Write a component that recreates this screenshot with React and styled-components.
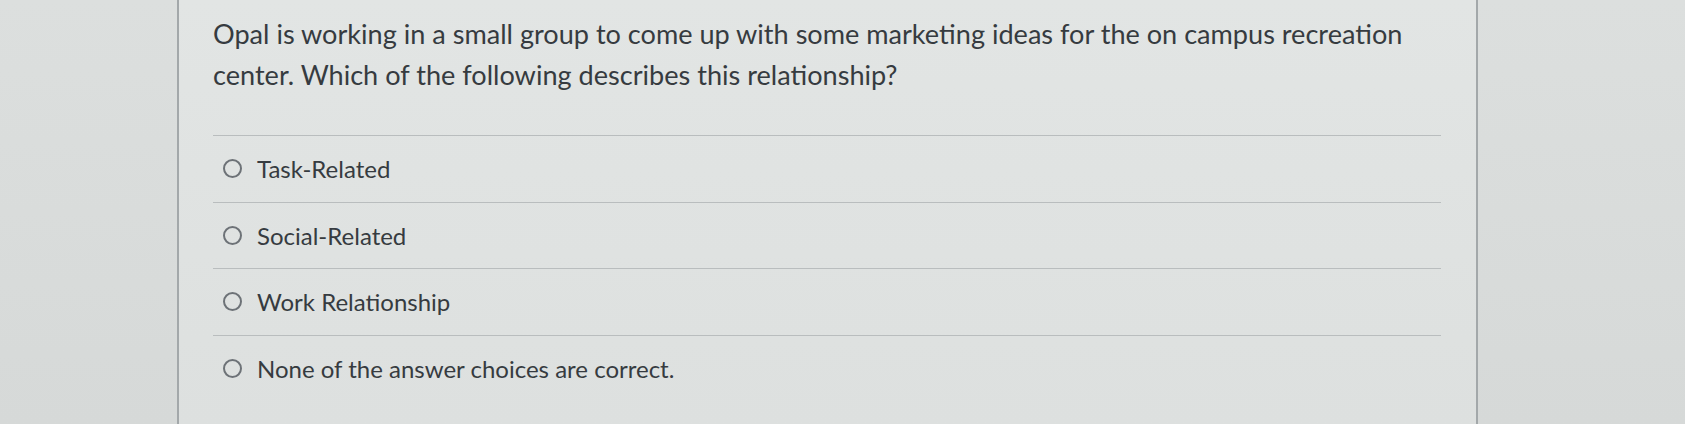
import styled, { createGlobalStyle } from "styled-components";

const answers = [
  "Task-Related",
  "Social-Related",
  "Work Relationship",
  "None of the answer choices are correct.",
];

export default function App() {
  return (
    <>
      <GlobalStyle />
      <Page>
        <Gutter />
        <Main>
          <Question>
            Opal is working in a small group to come up with some marketing ideas for the on campus recreation
            center. Which of the following describes this relationship?
          </Question>
          <AnswerList>
            {answers.map((text) => (
              <Answer key={text}>
                <Radio />
                <AnswerText>{text}</AnswerText>
              </Answer>
            ))}
          </AnswerList>
        </Main>
        <Gutter $right />
      </Page>
    </>
  );
}

const GlobalStyle = createGlobalStyle`
body {
  margin: 0;
  background: #dfe2e1;
}
*, *::before, *::after {
  box-sizing: border-box;
}
`

const Page = styled.div`
height: 424px;
display: flex;
background: linear-gradient(180deg, #e2e5e4 0%, #dde0df 100%);
font-family: Lato, "Open Sans", sans-serif;
color: #363b40;
overflow: hidden;
`

const Gutter = styled.div`
width: ${(p) => (p.$right ? "auto" : "177px")};
flex: ${(p) => (p.$right ? "1" : "none")};
background: linear-gradient(180deg, #dcdfde 0%, #d6d9d8 100%);
`

const Main = styled.div`
width: 1301px;
flex: none;
padding: 13px 35px 0 34px;
border-left: 2px solid #a3a8aa;
border-right: 2px solid #a3a8aa;
`

const Question = styled.div`
font-size: 27.1px;
line-height: 41px;
margin-bottom: 40px;
`

const AnswerList = styled.div`
border-top: 1.5px solid #b9bdbe;
`

const Answer = styled.div`
height: 66.5px;
display: flex;
align-items: center;
padding-left: 10px;
border-bottom: 1.5px solid #b9bdbe;
&:last-child {
  border-bottom: none;
}
`

const Radio = styled.span`
width: 19px;
height: 19px;
border-radius: 50%;
border: 2px solid #6d7277;
margin-right: 15px;
flex: none;
`

const AnswerText = styled.span`
font-size: 24px;
`
